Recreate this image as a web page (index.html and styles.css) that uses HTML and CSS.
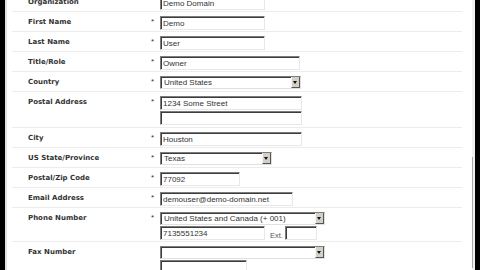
FILE: index.html
```html
<!DOCTYPE html>
<html>
<head>
  <title>Account Details</title>
  <link rel="stylesheet" href="styles.css">
</head>
<body>
  <div class="window">
    <div class="edge-left"></div>
    <div class="page">
      <div class="form">
        <div class="row">
          <div class="label">Organization</div>
          <div class="req"></div>
          <div class="field"><input class="text w-105" type="text" value="Demo Domain"></div>
        </div>
        <div class="row">
          <div class="label">First Name</div>
          <div class="req">*</div>
          <div class="field"><input class="text w-105" type="text" value="Demo"></div>
        </div>
        <div class="row">
          <div class="label">Last Name</div>
          <div class="req">*</div>
          <div class="field"><input class="text w-105" type="text" value="User"></div>
        </div>
        <div class="row">
          <div class="label">Title/Role</div>
          <div class="req">*</div>
          <div class="field"><input class="text w-140" type="text" value="Owner"></div>
        </div>
        <div class="row">
          <div class="label">Country</div>
          <div class="req">*</div>
          <div class="field">
            <div class="select w-141"><span class="value">United States</span><span class="arrow"></span></div>
          </div>
        </div>
        <div class="row tall">
          <div class="label">Postal Address</div>
          <div class="req">*</div>
          <div class="field stack">
            <input class="text w-142" type="text" value="1234 Some Street">
            <input class="text w-142" type="text" value="">
          </div>
        </div>
        <div class="row">
          <div class="label">City</div>
          <div class="req">*</div>
          <div class="field"><input class="text w-142" type="text" value="Houston"></div>
        </div>
        <div class="row">
          <div class="label">US State/Province</div>
          <div class="req">*</div>
          <div class="field">
            <div class="select w-112"><span class="value">Texas</span><span class="arrow"></span></div>
          </div>
        </div>
        <div class="row">
          <div class="label">Postal/Zip Code</div>
          <div class="req">*</div>
          <div class="field"><input class="text w-80" type="text" value="77092"></div>
        </div>
        <div class="row">
          <div class="label">Email Address</div>
          <div class="req">*</div>
          <div class="field"><input class="text w-133" type="text" value="demouser@demo-domain.net"></div>
        </div>
        <div class="row">
          <div class="label">Phone Number</div>
          <div class="req">*</div>
          <div class="field stack">
            <div class="select w-165"><span class="value">United States and Canada (+ 001)</span><span class="arrow"></span></div>
            <div class="phone-line">
              <input class="text w-105" type="text" value="7135551234">
              <span class="ext">Ext.</span>
              <input class="text w-32" type="text" value="">
            </div>
          </div>
        </div>
        <div class="row">
          <div class="label">Fax Number</div>
          <div class="req"></div>
          <div class="field stack">
            <div class="select w-165"><span class="value"></span><span class="arrow"></span></div>
            <input class="text w-87" type="text" value="">
          </div>
        </div>
      </div>
    </div>
    <div class="scrollbar"><div class="thumb"></div></div>
    <div class="edge-right"></div>
  </div>
</body>
</html>
```

FILE: styles.css
```css
body {
  margin: 0;
  background: #fff;
  font-family: "Liberation Sans", Arial, sans-serif;
}

.window {
  display: flex;
  height: 270px;
  overflow: hidden;
}

.edge-left {
  width: 5px;
  background: #000;
  border-right: 2px solid #e2e2e2;
}

.edge-right {
  width: 5px;
  background: #000;
}

.page {
  flex: 1;
  padding-left: 5px;
  overflow: hidden;
}

.form {
  width: 450px;
  margin-top: -8px;
}

.row {
  display: grid;
  grid-template-columns: 137px 11px 1fr;
  padding: 4px 0 1px;
  border-bottom: 1px solid #ececec;
}

.row.tall {
  padding-bottom: 2px;
}

.label {
  padding: 2px 0 0 16px;
  font-family: "DejaVu Sans", Verdana, sans-serif;
  font-weight: bold;
  font-size: 7px;
  line-height: 8px;
  color: #333;
}

.req {
  padding: 2px 0 0 2px;
  font-size: 8px;
  line-height: 8px;
  color: #333;
}

.field {
  display: flex;
}

.stack {
  flex-direction: column;
  gap: 1px;
}

.text {
  box-sizing: border-box;
  height: 14px;
  margin: 0;
  padding: 0 2px;
  border: 1px solid;
  border-color: #7c7c7c #e8e8e8 #e8e8e8 #7c7c7c;
  box-shadow: inset 1px 1px 0 #3c3c3c;
  font-family: "Liberation Sans", Arial, sans-serif;
  font-size: 8px;
  color: #333;
  background: #fff;
  outline: none;
}

.select {
  box-sizing: border-box;
  display: flex;
  justify-content: space-between;
  align-items: stretch;
  height: 13px;
  margin-bottom: 1px;
  border: 1px solid;
  border-color: #7c7c7c #e0e0e0 #e0e0e0 #7c7c7c;
  box-shadow: inset 1px 1px 0 #3c3c3c;
  background: #fff;
}

.stack .select {
  margin-bottom: 0;
}

.select .value {
  padding: 0 0 0 3px;
  font-size: 8px;
  line-height: 11px;
  color: #333;
  white-space: nowrap;
}

.select .arrow {
  position: relative;
  width: 7px;
  background: #d4d0c8;
  border-left: 1px solid #f4f4f4;
  border-right: 1px solid #555;
  border-bottom: 1px solid #555;
}

.select .arrow::after {
  content: "";
  position: absolute;
  left: 1px;
  top: 4px;
  border-left: 2.5px solid transparent;
  border-right: 2.5px solid transparent;
  border-top: 3px solid #111;
}

.phone-line {
  display: flex;
}

.ext {
  align-self: flex-end;
  margin: 0 2px 0 5px;
  font-size: 7.5px;
  line-height: 9px;
  color: #555;
}

.w-32 { width: 32px; }
.w-80 { width: 80px; }
.w-87 { width: 87px; }
.w-105 { width: 105px; }
.w-112 { width: 112px; }
.w-133 { width: 133px; }
.w-140 { width: 140px; }
.w-141 { width: 141px; }
.w-142 { width: 142px; }
.w-165 { width: 165px; }

.scrollbar {
  display: flex;
  flex-direction: column;
  width: 3px;
  background: #f0f0f0;
}

.thumb {
  height: 111px;
  margin-top: auto;
  margin-bottom: 2px;
  border-left: 1px solid #a8a8a8;
}
```
